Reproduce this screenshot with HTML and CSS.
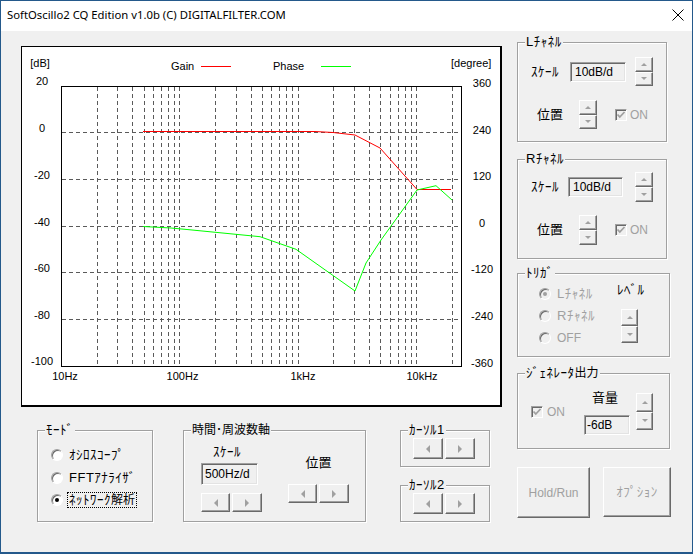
FILE: index.html
```html
<!DOCTYPE html>
<html>
<head>
<meta charset="utf-8">
<link rel="stylesheet" href="styles.css">
</head>
<body>
<div class="window">
  <div class="titlebar">
    <span class="title">SoftOscillo2 CQ Edition v1.0b (C) DIGITALFILTER.COM</span>
    <svg class="close" width="12" height="12" viewBox="0 0 12 12"><path d="M0.5 0.5L11.5 11.5M11.5 0.5L0.5 11.5" stroke="#000" stroke-width="1" fill="none"/></svg>
  </div>
  <div class="client">
    <div class="leftcol">
      <div class="plot">
        <svg width="478" height="358" viewBox="0 0 478 358">
          <g font-family="Liberation Sans, Arial, sans-serif" font-size="11" fill="#000">
            <text x="18" y="20" text-anchor="middle">[dB]</text>
            <text x="149" y="23">Gain</text>
            <text x="251" y="23">Phase</text>
            <text x="429" y="20">[degree]</text>
            <g text-anchor="middle">
              <text x="20" y="38">20</text>
              <text x="20" y="85">0</text>
              <text x="20" y="132">-20</text>
              <text x="20" y="178.5">-40</text>
              <text x="20" y="225">-60</text>
              <text x="20" y="272">-80</text>
              <text x="20" y="318">-100</text>
              <text x="460" y="40">360</text>
              <text x="460" y="86.5">240</text>
              <text x="460" y="133">120</text>
              <text x="460" y="180">0</text>
              <text x="460" y="226">-120</text>
              <text x="460" y="273">-240</text>
              <text x="460" y="320">-360</text>
              <text x="43" y="333">10Hz</text>
              <text x="160.5" y="333">100Hz</text>
              <text x="281" y="333">1kHz</text>
              <text x="400" y="333">10kHz</text>
            </g>
          </g>
          <line x1="179" y1="19.5" x2="209" y2="19.5" stroke="#ff0000" stroke-width="1"/>
          <line x1="299" y1="19.5" x2="329" y2="19.5" stroke="#00ff00" stroke-width="1"/>
          <path fill="none" stroke="#5a5a5a" stroke-width="1" stroke-dasharray="4 3"
            d="M75.5 40V319M95.5 40V319M110.5 40V319M122.5 40V319M131.5 40V319M139.5 40V319M146.5 40V319M152.5 40V319M157.5 40V319
               M193.5 40V319M214.5 40V319M229.5 40V319M240.5 40V319M249.5 40V319M257.5 40V319M264.5 40V319M270.5 40V319M276.5 40V319
               M311.5 40V319M332.5 40V319M347.5 40V319M358.5 40V319M368.5 40V319M376.5 40V319M383.5 40V319M389.5 40V319M394.5 40V319
               M430.5 40V319
               M40 85.5H439M40 132.5H439M40 179.5H439M40 225.5H439M40 272.5H439"/>
          <rect x="39.5" y="39.5" width="400" height="280" fill="none" stroke="#000" stroke-width="1"/>
          <polyline fill="none" stroke="#ff0000" stroke-width="1" points="121,84.5 293,84.5 311,85.5 333,88 358,101 395,142.5 429,142.5"/>
          <polyline fill="none" stroke="#00ff00" stroke-width="1" points="121,179.5 149,181 165,182.5 238,189.7 274,202.3 333,244 344,216 359,193 395,143 414,138.7 430,153"/>
        </svg>
      </div>
      <div class="bottomrow">
        <div class="group g-mode">
          <span class="legend kana">ﾓｰﾄﾞ</span>
          <div class="radio-row"><span class="radio"></span><span class="rlabel kana">ｵｼﾛｽｺｰﾌﾟ</span></div>
          <div class="radio-row"><span class="radio"></span><span class="rlabel kana">FFTｱﾅﾗｲｻﾞ</span></div>
          <div class="radio-row"><span class="radio on"></span><span class="rlabel kana focus">ﾈｯﾄﾜｰｸ<span class="kanji">解析</span></span></div>
        </div>
        <div class="group g-time">
          <span class="legend">時間･周波数軸</span>
          <div class="colA">
            <span class="lab kana">ｽｹｰﾙ</span>
            <div class="tb t500">500Hz/d</div>
            <div class="pair">
              <div class="btn hbtn w29"><span class="arr-l"></span></div>
              <div class="btn hbtn w30"><span class="arr-r"></span></div>
            </div>
          </div>
          <div class="colB">
            <span class="lab big">位置</span>
            <div class="pair">
              <div class="btn hbtn w29"><span class="arr-l"></span></div>
              <div class="btn hbtn w30"><span class="arr-r"></span></div>
            </div>
          </div>
        </div>
        <div class="cursors">
          <div class="group g-cur">
            <span class="legend kana">ｶｰｿﾙ1</span>
            <div class="pair">
              <div class="btn cbtn"><span class="arr-l"></span></div>
              <div class="btn cbtn"><span class="arr-r"></span></div>
            </div>
          </div>
          <div class="group g-cur">
            <span class="legend kana">ｶｰｿﾙ2</span>
            <div class="pair">
              <div class="btn cbtn"><span class="arr-l"></span></div>
              <div class="btn cbtn"><span class="arr-r"></span></div>
            </div>
          </div>
        </div>
      </div>
    </div>
    <div class="rightcol">
      <div class="group g-ch g-l">
        <span class="legend kana">Lﾁｬﾈﾙ</span>
        <div class="row row1">
          <span class="lab-scale kana">ｽｹｰﾙ</span>
          <div class="tb t10">10dB/d</div>
          <div class="spin"><div class="btn"><span class="arr-u"></span></div><div class="btn"><span class="arr-d"></span></div></div>
        </div>
        <div class="row row2">
          <span class="lab-pos big">位置</span>
          <div class="spin"><div class="btn"><span class="arr-u"></span></div><div class="btn"><span class="arr-d"></span></div></div>
          <span class="chk"><svg width="10" height="10" viewBox="0 0 10 10"><path d="M1.5 4.5L3.8 7L8.5 2" fill="none" stroke="#a0a0a0" stroke-width="1.8"/></svg></span>
          <span class="on-lab">ON</span>
        </div>
      </div>
      <div class="group g-ch g-r">
        <span class="legend kana">Rﾁｬﾈﾙ</span>
        <div class="row row1">
          <span class="lab-scale kana">ｽｹｰﾙ</span>
          <div class="tb t10">10dB/d</div>
          <div class="spin"><div class="btn"><span class="arr-u"></span></div><div class="btn"><span class="arr-d"></span></div></div>
        </div>
        <div class="row row2">
          <span class="lab-pos big">位置</span>
          <div class="spin"><div class="btn"><span class="arr-u"></span></div><div class="btn"><span class="arr-d"></span></div></div>
          <span class="chk"><svg width="10" height="10" viewBox="0 0 10 10"><path d="M1.5 4.5L3.8 7L8.5 2" fill="none" stroke="#a0a0a0" stroke-width="1.8"/></svg></span>
          <span class="on-lab">ON</span>
        </div>
      </div>
      <div class="group g-trig">
        <span class="legend kana">ﾄﾘｶﾞ</span>
        <div class="trig-radios">
          <div class="radio-row"><span class="radio dis on"></span><span class="rlabel kana dim">Lﾁｬﾈﾙ</span></div>
          <div class="radio-row"><span class="radio dis"></span><span class="rlabel kana dim">Rﾁｬﾈﾙ</span></div>
          <div class="radio-row"><span class="radio dis"></span><span class="rlabel dim">OFF</span></div>
        </div>
        <div class="trig-right">
          <span class="kana">ﾚﾍﾞﾙ</span>
          <div class="spin"><div class="btn"><span class="arr-u"></span></div><div class="btn"><span class="arr-d"></span></div></div>
        </div>
      </div>
      <div class="group g-gen">
        <span class="legend kana">ｼﾞｪﾈﾚｰﾀ<span class="kanji">出力</span></span>
        <div class="gen-chk">
          <span class="chk"><svg width="10" height="10" viewBox="0 0 10 10"><path d="M1.5 4.5L3.8 7L8.5 2" fill="none" stroke="#a0a0a0" stroke-width="1.8"/></svg></span>
          <span class="on-lab">ON</span>
        </div>
        <div class="gen-vol">
          <span class="lab big">音量</span>
          <div class="tb t6">-6dB</div>
        </div>
        <div class="spin"><div class="btn"><span class="arr-u"></span></div><div class="btn"><span class="arr-d"></span></div></div>
      </div>
      <div class="btnrow">
        <div class="btn bigbtn">Hold/Run</div>
        <div class="btn bigbtn opt kana">ｵﾌﾟｼｮﾝ</div>
      </div>
    </div>
  </div>
</div>
</body>
</html>
```

FILE: styles.css
```css
* { box-sizing: border-box; }
body { margin: 0; background: #1c5287; }

.window {
  width: 693px; height: 554px;
  border: 1px solid #24598b; border-bottom-width: 2px;
  background: #f0f0f0;
  display: flex; flex-direction: column; overflow: hidden;
  font-family: "Liberation Sans", "Noto Sans CJK JP", sans-serif;
  font-size: 12px; line-height: 14px; color: #000;
}

.titlebar {
  height: 30px; flex: none; background: #fff;
  display: flex; align-items: center; justify-content: space-between;
  padding: 0 8px 2px 6px;
}
.title { font-family: "Noto Sans", "Liberation Sans", sans-serif; font-size: 11.3px; color: #000; }
.close { display: block; }

.client { flex: 1; display: flex; }
.leftcol { width: 516px; flex: none; }

.plot {
  margin: 15px 0 0 20px; width: 481px; height: 361px;
  background: #fff; border: solid #000; border-width: 1px 2px 2px 1px;
}
.plot svg { display: block; }

.bottomrow { display: flex; align-items: flex-start; margin-top: 23px; padding-left: 36px; }

.group {
  position: relative; flex: none;
  border: 1px solid #a0a0a0;
  box-shadow: 1px 1px 0 #fff, inset 1px 1px 0 #fff;
}
.legend {
  position: absolute; top: -8px; left: 7px;
  padding: 0 1px; background: #f0f0f0; white-space: nowrap;
}
.kana { font-size: 13px; letter-spacing: 0.5px; }
.kanji { font-size: 12px; letter-spacing: 0; }
.big { font-size: 13px; }
.dim { color: #a0a0a0; }

/* buttons */
.btn {
  background: #f0f0f0;
  border: 1px solid; border-color: #fff #696969 #696969 #fff;
  box-shadow: inset -1px -1px 0 #a0a0a0;
  display: flex; align-items: center; justify-content: center;
}
.arr-u, .arr-d, .arr-l, .arr-r { width: 0; height: 0; border: solid transparent; }
.arr-u { border-width: 0 3px 3px 3px; border-bottom-color: #a0a0a0; }
.arr-d { border-width: 3px 3px 0 3px; border-top-color: #a0a0a0; }
.arr-l { border-width: 4px 4px 4px 0; border-right-color: #a0a0a0; }
.arr-r { border-width: 4px 0 4px 4px; border-left-color: #a0a0a0; }

.spin { display: flex; flex-direction: column; flex: none; }
.spin .btn { flex: 1; }

.pair { display: flex; gap: 2px; }
.hbtn { height: 19px; }
.w29 { width: 29px; }
.w30 { width: 30px; }
.cbtn { width: 30px; height: 21px; }

/* text boxes */
.tb {
  flex: none; display: flex; align-items: center;
  background: #f0f0f0;
  border: 1px solid; border-color: #a0a0a0 #fff #fff #a0a0a0;
  box-shadow: inset 1px 1px 0 #696969, inset -1px -1px 0 #e3e3e3;
  padding-left: 4px; white-space: nowrap;
}

/* radios and checks */
.radio-row { display: flex; align-items: center; height: 22.5px; }
.radio {
  flex: none; width: 12px; height: 12px; border-radius: 50%;
  border: 1px solid; border-color: #a0a0a0 #fff #fff #a0a0a0;
  background: #fff; box-shadow: inset 1px 1px 0 #696969;
  display: flex; align-items: center; justify-content: center;
}
.radio.on::after { content: ""; width: 4px; height: 4px; border-radius: 50%; background: #000; }
.radio.dis { background: #f0f0f0; }
.radio.dis.on::after { background: #a0a0a0; }
.rlabel { margin-left: 4px; padding: 0 1px; border: 1px dotted transparent; line-height: 14px; white-space: nowrap; }
.rlabel.focus { border-color: #000; }

.chk {
  flex: none; width: 12px; height: 12px;
  border: 1px solid; border-color: #a0a0a0 #fff #fff #a0a0a0;
  box-shadow: inset 1px 1px 0 #696969;
  background: #f0f0f0;
  display: flex; align-items: center; justify-content: center;
}
.chk svg { display: block; }
.on-lab { margin-left: 3px; color: #a0a0a0; }

/* mode */
.g-mode { width: 116px; height: 92px; padding: 13px 0 0 13px; }

/* time axis */
.g-time { width: 183px; height: 92px; margin-left: 30px; display: flex; padding-left: 17px; }
.colA { width: 61px; display: flex; flex-direction: column; align-items: flex-start; }
.colA .lab { margin: 14px 0 0 12px; }
.t500 { width: 57px; height: 22px; margin-top: 4px; padding-left: 3px; }
.colA .pair { margin-top: 8px; }
.colB { margin-left: 26px; width: 61px; display: flex; flex-direction: column; align-items: center; }
.colB .lab { margin-top: 25px; }
.colB .pair { margin-top: 14px; }

/* cursors */
.cursors { margin-left: 34px; display: flex; flex-direction: column; gap: 18px; }
.g-cur { width: 90px; height: 37px; padding: 7px 0 0 12px; }

/* right column */
.rightcol { display: flex; flex-direction: column; align-items: flex-start; padding-top: 11px; }
.g-ch { width: 150px; height: 100px; }
.g-r { margin-top: 17px; }
.row { display: flex; align-items: center; }
.g-l .row1 { margin-top: 14px; height: 29px; }
.g-l .row2 { margin-top: 14px; height: 29px; }
.g-r .row1 { margin-top: 12px; height: 30px; }
.g-r .row2 { margin-top: 13px; height: 30px; }
.lab-scale { margin-left: 13px; width: 39px; flex: none; }
.g-r .lab-scale { width: 37px; }
.t10 { width: 56px; height: 20px; }
.g-r .t10 { width: 55px; }
.row1 .spin { margin-left: 9px; width: 18px; height: 100%; }
.g-r .row1 .spin { margin-left: 12px; }
.lab-pos { margin-left: 19px; width: 42px; flex: none; }
.row2 .spin { width: 18px; height: 100%; }
.row2 .chk { margin-left: 18px; }

.g-trig { width: 153px; height: 84px; margin-top: 14px; display: flex; padding: 9px 0 0 21px; }
.trig-radios { width: 78px; flex: none; }
.trig-radios .radio-row { height: 22px; }
.trig-right { display: flex; flex-direction: column; align-items: flex-start; }
.trig-right .spin { margin: 12px 0 0 4px; width: 17px; height: 34px; }

.g-gen { width: 153px; height: 76px; margin-top: 16px; display: flex; align-items: flex-start; padding-left: 13px; }
.gen-chk { display: flex; align-items: center; margin-top: 31px; width: 53px; flex: none; }
.gen-chk .on-lab { margin-left: 4px; }
.gen-vol { width: 46px; display: flex; flex-direction: column; align-items: flex-start; flex: none; }
.gen-vol .lab { margin: 17px 0 0 8px; }
.t6 { width: 46px; height: 20px; margin-top: 10px; padding-left: 2px; }
.g-gen .spin { margin: 19px 0 0 6px; width: 17px; height: 37px; }

.btnrow { display: flex; gap: 13px; margin-top: 18px; }
.bigbtn { width: 73px; height: 51px; color: #a0a0a0; }
.bigbtn.opt { width: 68px; height: 50px; }
```
